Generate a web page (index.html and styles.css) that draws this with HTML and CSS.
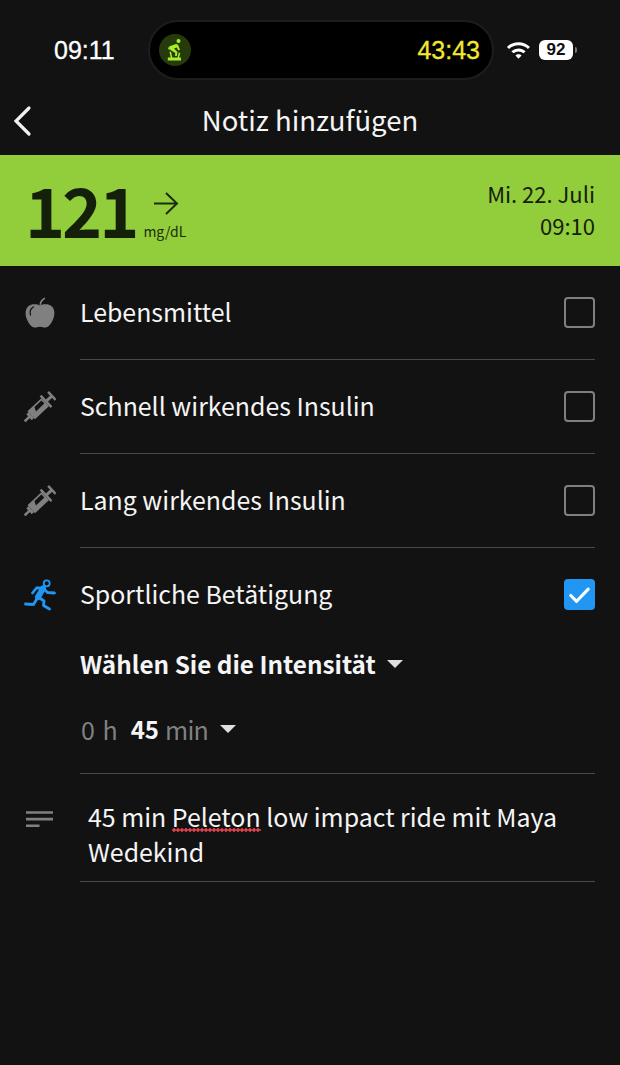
FILE: index.html
```html
<!DOCTYPE html>
<html lang="de">
<head>
<meta charset="utf-8">
<title>Notiz hinzufügen</title>
<link rel="stylesheet" href="styles.css">
</head>
<body>
<div class="screen">
  <div class="status">
    <span class="clock">09:11</span>
    <div class="island">
      <span class="activity">
        <svg viewBox="0 0 16 24" width="16" height="24"><circle cx="11.500" cy="3" r="2" fill="#a6f02a"/><path d="M2 8.500l7-2.500 2 .8 2 5-1.800.8-1.400-3-2.800 1 3.500 3.500-.6 4H8l.3-3L3.500 12zM1 9.500h3v2H1.500zM2.500 14l1.500-.5 1.300 6h5.200l1.300-5 1.500.4-1.300 4.600h2v3H.8v-3h2.900z" fill="#a6f02a"/></svg>
      </span>
      <span class="timer">43:43</span>
    </div>
    <div class="status-right">
      <svg class="wifi" viewBox="2.500 3.500 19 13.500" width="23" height="17"><path d="M12 3.500c3.700 0 7 1.400 9.500 3.800l-1.700 1.800A11.300 11.300 0 0 0 12 6 11.300 11.300 0 0 0 4.200 9.100L2.500 7.300A13.700 13.700 0 0 1 12 3.500z M12 8.500c2.300 0 4.300.9 5.900 2.300l-1.800 1.800A6 6 0 0 0 12 11a6 6 0 0 0-4.100 1.600l-1.800-1.800A8.700 8.700 0 0 1 12 8.500z M12 13.300c1 0 1.900.4 2.500 1L12 17l-2.500-2.700c.6-.6 1.500-1 2.500-1z" fill="#fff"/></svg>
      <span class="battery">92</span><span class="battery-tip"></span>
    </div>
  </div>

  <header class="nav">
    <svg class="back" viewBox="0 0 20 32" width="20" height="32"><path d="M17 3 4 16l13 13" fill="none" stroke="#f2f2f2" stroke-width="3.200" stroke-linecap="round"/></svg>
    <h1>Notiz hinzufügen</h1>
  </header>

  <section class="reading">
    <span class="value">121</span>
    <div class="trend">
      <svg viewBox="0 0 28 26" width="28" height="26"><path d="M2 12.500h23M14 2l11 10.500L14 23" fill="none" stroke="#1c2c0c" stroke-width="2"/></svg>
      <span class="unit">mg/dL</span>
    </div>
    <div class="when">
      <span>Mi. 22. Juli</span>
      <span>09:10</span>
    </div>
  </section>

  <ul class="list">
    <li class="row">
      <span class="icon">
        <svg viewBox="0 0 32 32" width="32" height="32"><path d="M16 8.500c3-1.500 8.500-2 12 1 3 3 3 8.500 1 13-1.700 4-4.500 8-7.500 8-2 0-3-.8-5.500-.8s-3.500.8-5.500.8c-3 0-5.800-4-7.500-8-2-4.500-2-10 1-13 3.500-3 9-2.500 12-1z" fill="#808080"/><path d="M15.500 8c0-3 1.500-6 5-7.500l.8 1.200C18.500 3.500 17.300 5.500 17 8z" fill="#808080"/><path d="M6.500 18c-1-3.500-.5-6 3-8" fill="none" stroke="#121212" stroke-width="1.300" stroke-linecap="round"/></svg>
      </span>
      <span class="label">Lebensmittel</span>
      <span class="box"></span>
    </li>
    <li class="row">
      <span class="icon">
        <svg viewBox="0 0 32 32" width="32" height="32"><use href="#syringe"/></svg>
      </span>
      <span class="label">Schnell wirkendes Insulin</span>
      <span class="box"></span>
    </li>
    <li class="row">
      <span class="icon">
        <svg viewBox="0 0 32 32" width="32" height="32"><use href="#syringe"/></svg>
      </span>
      <span class="label">Lang wirkendes Insulin</span>
      <span class="box"></span>
    </li>
    <li class="row row-open">
      <div class="row-head">
        <span class="icon">
          <svg viewBox="0 0 32 32" width="32" height="32">
            <circle cx="22.700" cy="4.300" r="3" fill="none" stroke="#2196f3" stroke-width="1.800"/>
            <path d="M19 9.500 14 18" fill="none" stroke="#2196f3" stroke-width="6" stroke-linecap="round"/>
            <path d="M19 9H12.500L8.500 14M20 10l3.500 3.500 7 .5M14 18l-4.500 7.500L1.500 25M15 18.500l5 3.500-.5 4.500 6 3.500" fill="none" stroke="#2196f3" stroke-width="2.800" stroke-linecap="round" stroke-linejoin="round"/>
          </svg>
        </span>
        <span class="label">Sportliche Betätigung</span>
        <span class="box box-on">
          <svg viewBox="0 0 32 32" width="32" height="32"><path d="M7 16.500l6 6L25 10" fill="none" stroke="#fff" stroke-width="3.200" stroke-linecap="round" stroke-linejoin="round"/></svg>
        </span>
      </div>
      <div class="intensity">Wählen Sie die Intensität<span class="caret caret-light"></span></div>
      <div class="duration"><span class="hours">0 h</span><b>45</b><span class="mins">min</span><span class="caret caret-light"></span></div>
    </li>
    <li class="note">
      <span class="icon note-icon">
        <svg viewBox="0 0 28 20" width="28" height="20"><path d="M0 1.200h27v2.600H0zM0 7.800h27v2.600H0zM0 14.500h13.500v2.600H0z" fill="#808080"/></svg>
      </span>
      <p>45 min <span class="misspelt">Peleton</span> low impact ride mit Maya Wedekind</p>
    </li>
  </ul>
</div>

<svg class="defs" width="0" height="0">
  <symbol id="syringe" viewBox="0 0 32 32">
    <g transform="rotate(-43 16 16)" fill="#808080">
      <rect x="-5" y="14.700" width="7" height="2.600"/>
      <rect x="1" y="12" width="3" height="8"/>
      <path fill-rule="evenodd" d="M4 10.500h19v11H4zM12 12.200l-2 4.300h11.500v-4.300z"/>
      <rect x="23" y="8" width="2.500" height="16"/>
      <rect x="25" y="14.500" width="7" height="3"/>
      <rect x="31" y="10.500" width="2.500" height="11"/>
    </g>
  </symbol>
</svg>
</body>
</html>
```

FILE: styles.css
```css
* { box-sizing: border-box; }
html, body { margin: 0; padding: 0; }
body {
  background: #121212;
  color: #f5f5f5;
  font-family: "Noto Sans CJK JP", "Noto Sans", sans-serif;
  width: 620px;
  height: 1065px;
  overflow: hidden;
}
.screen { display: flex; flex-direction: column; }

.status {
  height: 100px;
  padding: 20px 26px 0 54px;
  display: flex;
  align-items: flex-start;
  font-family: "Liberation Sans", sans-serif;
}
.clock {
  width: 94px;
  margin-top: 16px;
  font-size: 25px;
  line-height: 28px;
  font-weight: 500;
  color: #fff;
  -webkit-text-stroke: 0.3px #fff;
}
.island {
  width: 346px;
  height: 60px;
  background: #000;
  border: 2px solid #1d1d1d;
  border-radius: 30px;
  display: flex;
  align-items: center;
  justify-content: space-between;
  padding: 0 12px 0 9px;
}
.activity {
  width: 32px;
  height: 32px;
  border-radius: 50%;
  background: #263a0c;
  display: flex;
  align-items: center;
  justify-content: center;
}
.timer {
  font-size: 25px;
  font-weight: 500;
  color: #f5e92c;
  -webkit-text-stroke: 0.3px #f5e92c;
}
.status-right {
  display: flex;
  align-items: center;
  margin: 20px 0 0 13px;
}
.wifi { margin-right: 9px; }
.battery {
  width: 34px;
  height: 20px;
  border-radius: 6px;
  background: #fff;
  color: #111;
  font-size: 17px;
  line-height: 20px;
  font-weight: 700;
  text-align: center;
}
.battery-tip {
  width: 2px;
  height: 6px;
  margin-left: 2px;
  border-radius: 0 2px 2px 0;
  background: #777;
}

.nav {
  height: 55px;
  position: relative;
  display: flex;
  align-items: flex-start;
  justify-content: center;
}
.nav h1 {
  margin: 0;
  font-size: 27.500px;
  line-height: 38px;
  font-weight: 400;
  color: #f5f5f5;
}
.back { position: absolute; left: 12px; top: 5px; }

.reading {
  height: 111px;
  background: #92cd3c;
  color: #15200a;
  padding: 0 25px 0 25px;
  display: flex;
  align-items: flex-start;
}
.value {
  font-size: 68px;
  line-height: 108px;
  font-weight: 700;
  letter-spacing: -3px;
}
.trend {
  margin: 36px 0 0 7px;
  display: flex;
  flex-direction: column;
  align-items: flex-start;
}
.trend svg { margin: 0 0 4px 9px; }
.unit {
  font-size: 14px;
  line-height: 20px;
  color: #1c2c0c;
}
.when {
  margin-left: auto;
  padding-top: 22px;
  display: flex;
  flex-direction: column;
  align-items: flex-end;
  font-size: 22px;
  line-height: 32px;
}

.list { list-style: none; margin: 0; padding: 0; }
.row {
  height: 94px;
  margin-left: 80px;
  margin-right: 25px;
  border-bottom: 1px solid #4a4a4a;
  display: flex;
  align-items: center;
  position: relative;
}
.icon { position: absolute; left: -56px; top: 31px; width: 32px; height: 32px; }
.label { font-size: 24.900px; line-height: 36px; padding-bottom: 3px; flex: 1; }
.box {
  width: 31px;
  height: 31px;
  border: 2.500px solid #7f7f7f;
  border-radius: 4px;
}
.box-on {
  background: #2196f3;
  border: 0;
  display: flex;
  margin-top: -2px;
}
.row-open {
  height: 226px;
  display: block;
}
.row-head {
  height: 94px;
  display: flex;
  align-items: center;
  position: relative;
}
.row-head .label { padding-bottom: 5px; }
.intensity {
  margin-top: 4px;
  font-size: 24.300px;
  line-height: 36px;
  font-weight: 700;
  display: flex;
  align-items: center;
}
.caret {
  width: 0;
  height: 0;
  border-left: 8px solid transparent;
  border-right: 8px solid transparent;
  border-top: 8px solid #e0e0e0;
  margin-left: 11px;
}
.duration {
  margin-top: 29px;
  font-size: 25px;
  line-height: 36px;
  color: #808080;
  display: flex;
  align-items: center;
  gap: 8px;
}
.hours { word-spacing: 2px; margin-left: 1px; }
.mins { letter-spacing: -0.7px; margin-left: -2px; }
.duration b { color: #f5f5f5; font-size: 24px; margin-left: 5px; }
.duration .caret { margin-left: 4px; }
.note {
  margin: 0 25px 0 80px;
  height: 108px;
  border-bottom: 1px solid #4a4a4a;
  position: relative;
  padding: 25px 0 0 8px;
}
.note-icon { left: -54px; top: 36px; height: 20px; }
.note p {
  margin: 0;
  font-size: 24.900px;
  line-height: 35px;
}
.misspelt {
  background-image: radial-gradient(circle at center, #e0404c 1.500px, transparent 1.900px);
  background-size: 4px 4px;
  background-repeat: repeat-x;
  background-position: left 0 bottom 2px;
}
.defs { position: absolute; }
```
